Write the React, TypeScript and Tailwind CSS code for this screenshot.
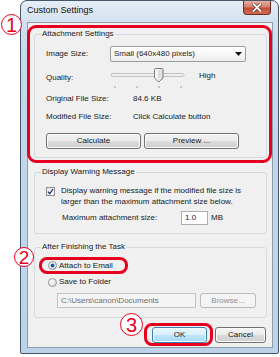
import React from "react";

const RED = "border-[#e60020]";

function Group({ label, className, children }: { label: string; className: string; children: React.ReactNode }) {
  return (
    <fieldset className={"w-[233px] rounded-[3px] border border-[#d3dbe2] " + className}>
      <legend className="ml-[6px] px-[1px] text-[8px] leading-[10px]">{label}</legend>
      {children}
    </fieldset>
  );
}

function Btn({ children, className, disabled }: { children: React.ReactNode; className: string; disabled?: boolean }) {
  return (
    <div
      className={
        "flex items-center justify-center rounded-[3px] border " +
        (disabled
          ? "border-[#b8bcbf] bg-[#f4f4f4] text-[#8d8d8d] "
          : "border-[#707070] bg-[linear-gradient(180deg,#f3f3f3_0%,#ebebeb_50%,#dcdcdc_50%,#cfcfcf_100%)] shadow-[inset_0_0_0_1px_#fbfbfb] ") +
        className
      }
    >
      {children}
    </div>
  );
}

function Radio({ checked }: { checked?: boolean }) {
  return (
    <svg width="9" height="9" viewBox="0 0 9 9" className="shrink-0">
      <defs>
        <radialGradient id={checked ? "rg1" : "rg2"} cx="0.35" cy="0.35" r="0.7">
          <stop offset="0" stopColor="#ffffff" />
          <stop offset="1" stopColor="#d8dadc" />
        </radialGradient>
      </defs>
      <circle cx="4.5" cy="4.5" r="4" fill={checked ? "url(#rg1)" : "url(#rg2)"} stroke="#8a8c8e" strokeWidth="0.9" />
      {checked && <circle cx="4.5" cy="4.5" r="1.9" fill="#1d5d9a" />}
    </svg>
  );
}

export default function App() {
  return (
    <div className="relative h-[357px] w-[280px] overflow-hidden bg-white font-['Liberation_Sans',Arial,sans-serif] text-[8px] leading-[10px] text-[#1a1a1a]">
      {/* window */}
      <div className="ml-[20px] flex h-[354px] w-[259px] flex-col rounded-t-[7px] rounded-b-[2px] border border-[#46566a] bg-[linear-gradient(180deg,#e6eef6_0px,#d3e1ef_21px,#c4d8ec_60px,#bcd3ea_100%)]">
        {/* title bar */}
        <div className="flex h-[21px] items-start justify-between">
          <div className="pl-[6px] pt-[4px] text-[9px] leading-[11px] text-[#101010]">Custom Settings</div>
          <div className="mr-[7px] flex h-[14px] w-[28px] items-center justify-center rounded-b-[4px] border border-t-0 border-[#6a2d25] bg-[linear-gradient(180deg,#e9b0a2_0%,#d6806d_45%,#c34a36_55%,#d26c55_100%)]">
            <svg width="10" height="9" viewBox="0 0 10 9">
              <path d="M1.5 1 L8.5 8 M8.5 1 L1.5 8" stroke="#5a2a22" strokeWidth="3.2" strokeLinecap="square" />
              <path d="M1.5 1 L8.5 8 M8.5 1 L1.5 8" stroke="#ffffff" strokeWidth="1.8" strokeLinecap="square" />
            </svg>
          </div>
        </div>

        {/* client area */}
        <div className="ml-[6px] flex h-[326px] w-[246px] flex-col border border-[#8e9dac] bg-[#f0f0f0]">
          {/* red box 1 */}
          <div className={"mt-[2px] -ml-px w-[245px] rounded-[9px] border-[3px] pt-[1px] pb-[2px] pl-[4px] " + RED}>
            <Group label="Attachment Settings" className="">
              <div className="flex flex-col pl-[11px] pb-[8px]">
                <div className="mt-[7px] flex h-[16px] items-center">
                  <span className="w-[64px]">Image Size:</span>
                  <div className="flex h-[16px] w-[136px] items-center justify-between rounded-[2px] border border-[#9c9c9c] bg-[linear-gradient(180deg,#ffffff_0%,#f7f7f7_50%,#ededed_100%)] pl-[3px] pr-[3px]">
                    <span>Small (640x480 pixels)</span>
                    <svg width="7" height="4" viewBox="0 0 7 4">
                      <path d="M0 0 H7 L3.5 4 Z" fill="#111" />
                    </svg>
                  </div>
                </div>
                <div className="flex h-[28px]">
                  <span className="w-[62px] pt-[11px]">Quality:</span>
                  <svg width="80" height="28" viewBox="0 0 80 28" className="shrink-0">
                    <defs>
                      <linearGradient id="thumb" x1="0" y1="0" x2="1" y2="0">
                        <stop offset="0" stopColor="#ffffff" />
                        <stop offset="1" stopColor="#d9d9d9" />
                      </linearGradient>
                    </defs>
                    <rect x="3" y="11.5" width="73" height="3" rx="1.2" fill="#eceeef" stroke="#b4b8bb" strokeWidth="0.8" />
                    <path d="M46.5 7.5 Q46.5 6.5 47.5 6.5 H54 Q55 6.5 55 7.5 V16 L50.75 20 L46.5 16 Z" fill="url(#thumb)" stroke="#6f6f6f" strokeWidth="0.9" />
                    <line x1="51" y1="8.5" x2="51" y2="16" stroke="#c9c9c9" strokeWidth="0.8" />
                    <line x1="7" y1="24" x2="7" y2="26" stroke="#9c9c9c" strokeWidth="1" />
                    <line x1="29" y1="24" x2="29" y2="26" stroke="#9c9c9c" strokeWidth="1" />
                    <line x1="51" y1="24" x2="51" y2="26" stroke="#9c9c9c" strokeWidth="1" />
                    <line x1="73" y1="24" x2="73" y2="26" stroke="#9c9c9c" strokeWidth="1" />
                  </svg>
                  <span className="ml-[11px] pt-[9px]">High</span>
                </div>
                <div className="mt-[4px] flex h-[10px]">
                  <span className="w-[87px]">Original File Size:</span>
                  <span>84.6 KB</span>
                </div>
                <div className="mt-[8px] flex h-[10px]">
                  <span className="w-[87px]">Modified File Size:</span>
                  <span>Click Calculate button</span>
                </div>
                <div className="mt-[11px] flex gap-[3px]">
                  <Btn className="h-[16px] w-[95px]">Calculate</Btn>
                  <Btn className="h-[16px] w-[95px]">Preview ...</Btn>
                </div>
              </div>
            </Group>
          </div>

          {/* group 2 */}
          <Group label="Display Warning Message" className="mt-[4px] ml-[6px]">
            <div className="flex flex-col pl-[11px] pb-[8px]">
              <div className="mt-[8px] flex items-start">
                <div className="mt-[2px] flex h-[9px] w-[9px] shrink-0 items-center justify-center border border-[#8e8f8f] bg-[linear-gradient(135deg,#e6e6e6_0%,#ffffff_100%)]">
                  <svg width="7" height="7" viewBox="0 0 7 7">
                    <path d="M1 3.6 L2.8 5.6 L6 1" fill="none" stroke="#22336a" strokeWidth="1.3" />
                  </svg>
                </div>
                <span className="ml-[6px] whitespace-nowrap leading-[11px]">
                  Display warning message if the modified file size is
                  <br />
                  larger than the maximum attachment size below.
                </span>
              </div>
              <div className="mt-[4px] flex h-[14px] items-center">
                <span className="w-[135px] pl-[16px]">Maximum attachment size:</span>
                <div className="flex h-[14px] w-[27px] items-center border border-[#abadb3] bg-white pl-[3px]">1.0</div>
                <span className="ml-[3px]">MB</span>
              </div>
            </div>
          </Group>

          {/* group 3 */}
          <Group label="After Finishing the Task" className="mt-[8px] ml-[6px]">
            <div className="flex flex-col pb-[9px]">
              <div className={"mt-[5px] ml-[4px] flex h-[17px] w-[89px] items-center rounded-[8px] border-[3px] pl-[6px] " + RED}>
                <Radio checked />
                <span className="ml-[2px]">Attach to Email</span>
              </div>
              <div className="mt-[3px] flex h-[10px] items-center pl-[13px]">
                <Radio />
                <span className="ml-[2px]">Save to Folder</span>
              </div>
              <div className="mt-[6px] ml-[22px] flex h-[15px]">
                <div className="flex w-[139px] items-center border border-[#c3c6c9] bg-[#f4f4f4] pl-[3px] text-[#6f6f6f]">
                  {"C:\\Users\\canon\\Documents"}
                </div>
                <Btn disabled className="ml-[4px] w-[56px]">Browse...</Btn>
              </div>
            </div>
          </Group>

          {/* bottom buttons */}
          <div className="mt-[5px] flex">
            <div className={"ml-[116px] h-[23px] w-[69px] rounded-[8px] border-[3px] pt-[1px] pl-[5px] " + RED}>
              <div className="flex h-[16px] w-[55px] items-center justify-center rounded-[3px] border border-[#3c7fb1] bg-[linear-gradient(180deg,#eaf6fd_0%,#d9f0fc_50%,#bee6fd_50%,#a7d9f5_100%)] shadow-[inset_0_0_0_1px_#f4fbff]">
                OK
              </div>
            </div>
            <Btn className="mt-[4px] ml-[2px] h-[16px] w-[51px]">Cancel</Btn>
          </div>
        </div>
      </div>

      {/* annotation circles */}
      <div className="absolute left-[1px] top-[14px] flex h-[21px] w-[21px] items-center justify-center rounded-full border-[1.5px] border-[#e60020] bg-white text-[20px] leading-none text-[#e60020]">
        1
      </div>
      <div className="absolute left-[14px] top-[247px] flex h-[20px] w-[20px] items-center justify-center rounded-full border-[1.5px] border-[#e60020] bg-white text-[19px] leading-none text-[#e60020]">
        2
      </div>
      <div className="absolute left-[120px] top-[313px] flex h-[23px] w-[23px] items-center justify-center rounded-full border-[1.5px] border-[#e60020] bg-white text-[20px] leading-none text-[#e60020]">
        3
      </div>
    </div>
  );
}
